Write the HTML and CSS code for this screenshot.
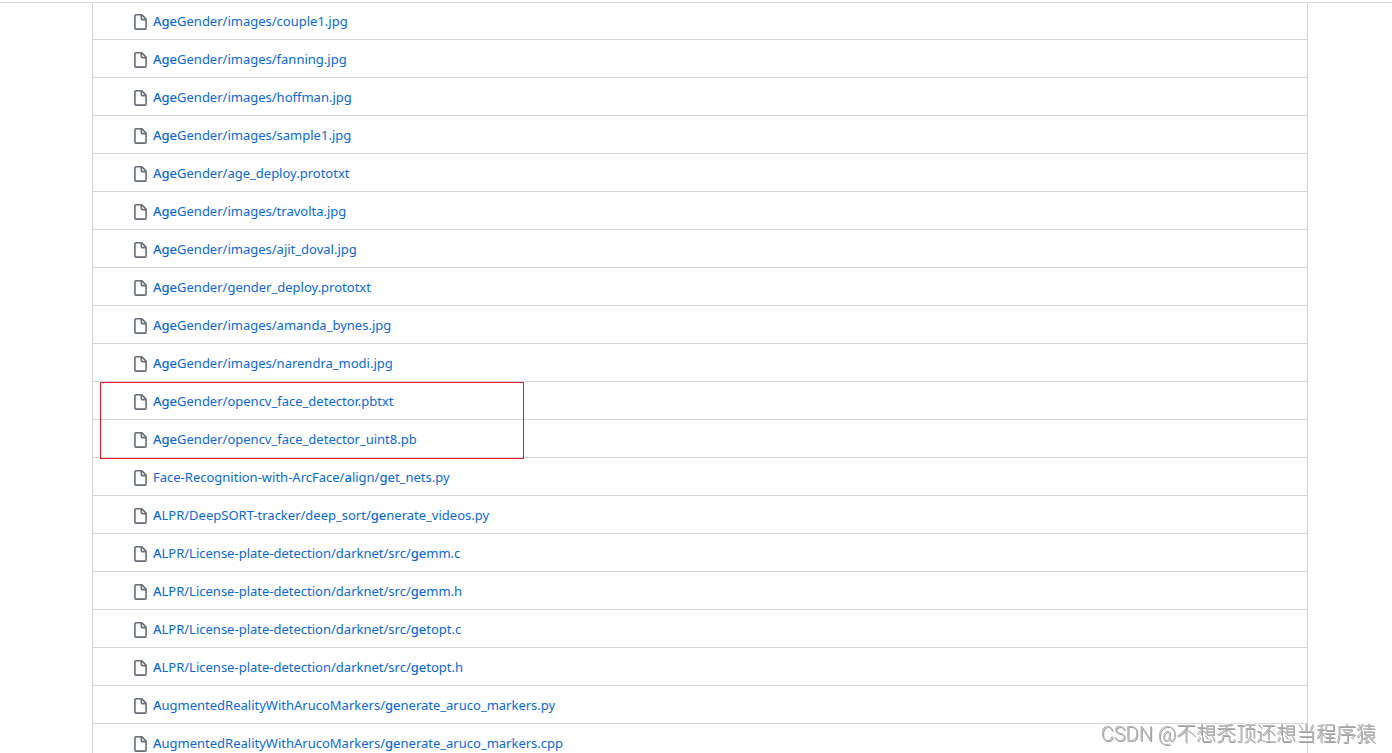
FILE: index.html
```
<!DOCTYPE html>
<html lang="en">
<head>
<meta charset="utf-8">
<title>File search</title>
<link rel="stylesheet" href="styles.css">
</head>
<body>
<svg class="sprite" aria-hidden="true">
  <symbol id="file" viewBox="0 0 16 16"><path fill-rule="evenodd" d="M3.75 1.5a.25.25 0 00-.25.25v11.5c0 .138.112.25.25.25h8.5a.25.25 0 00.25-.25V6H9.75A1.75 1.75 0 018 4.25V1.5H3.75zm5.75.56v2.19c0 .138.112.25.25.25h2.19L9.5 2.06zM2 1.75C2 .784 2.784 0 3.75 0h5.086c.464 0 .909.184 1.237.513l3.414 3.414c.329.328.513.773.513 1.237v8.086A1.75 1.75 0 0112.25 15h-8.5A1.75 1.75 0 012 13.25V1.75z"/></symbol>
</svg>
<main class="page">
<ul class="files">
<li class="row"><svg class="icon"><use href="#file"/></svg><a href="#"><b>Age</b>Gender/images/couple1.jpg</a></li>
<li class="row"><svg class="icon"><use href="#file"/></svg><a href="#"><b>Age</b>Gender/images/fanning.jpg</a></li>
<li class="row"><svg class="icon"><use href="#file"/></svg><a href="#"><b>Age</b>Gender/images/hoffman.jpg</a></li>
<li class="row"><svg class="icon"><use href="#file"/></svg><a href="#"><b>Age</b>Gender/images/sample1.jpg</a></li>
<li class="row"><svg class="icon"><use href="#file"/></svg><a href="#"><b>Age</b>Gender/age_deploy.prototxt</a></li>
<li class="row"><svg class="icon"><use href="#file"/></svg><a href="#"><b>Age</b>Gender/images/travolta.jpg</a></li>
<li class="row"><svg class="icon"><use href="#file"/></svg><a href="#"><b>Age</b>Gender/images/ajit_doval.jpg</a></li>
<li class="row"><svg class="icon"><use href="#file"/></svg><a href="#"><b>Age</b>Gender/gender_deploy.prototxt</a></li>
<li class="row"><svg class="icon"><use href="#file"/></svg><a href="#"><b>Age</b>Gender/images/amanda_bynes.jpg</a></li>
<li class="row"><svg class="icon"><use href="#file"/></svg><a href="#"><b>Age</b>Gender/images/narendra_modi.jpg</a></li>
<li class="row marked"><svg class="icon"><use href="#file"/></svg><a href="#"><b>Age</b>Gender/opencv_face_detector.pbtxt</a></li>
<li class="row"><svg class="icon"><use href="#file"/></svg><a href="#"><b>Age</b>Gender/opencv_face_detector_uint8.pb</a></li>
<li class="row"><svg class="icon"><use href="#file"/></svg><a href="#">Face-Recognition-with-ArcFace/<b>a</b>lign/<b>ge</b>t_nets.py</a></li>
<li class="row"><svg class="icon"><use href="#file"/></svg><a href="#"><b>A</b>LPR/DeepSORT-tracker/deep_sort/<b>ge</b>nerate_videos.py</a></li>
<li class="row"><svg class="icon"><use href="#file"/></svg><a href="#"><b>A</b>LPR/License-plate-detection/darknet/src/<b>ge</b>mm.c</a></li>
<li class="row"><svg class="icon"><use href="#file"/></svg><a href="#"><b>A</b>LPR/License-plate-detection/darknet/src/<b>ge</b>mm.h</a></li>
<li class="row"><svg class="icon"><use href="#file"/></svg><a href="#"><b>A</b>LPR/License-plate-detection/darknet/src/<b>ge</b>topt.c</a></li>
<li class="row"><svg class="icon"><use href="#file"/></svg><a href="#"><b>A</b>LPR/License-plate-detection/darknet/src/<b>ge</b>topt.h</a></li>
<li class="row"><svg class="icon"><use href="#file"/></svg><a href="#"><b>A</b>ugmentedRealityWithArucoMarkers/<b>ge</b>nerate_aruco_markers.py</a></li>
<li class="row"><svg class="icon"><use href="#file"/></svg><a href="#"><b>A</b>ugmentedRealityWithArucoMarkers/<b>ge</b>nerate_aruco_markers.cpp</a></li>
</ul>
</main>
<div class="watermark">CSDN @不想秃顶还想当程序猿</div>
</body>
</html>
```
FILE: styles.css
```
*, *::after { box-sizing: border-box; }
body {
  margin: 0;
  padding-top: 2px;
  height: 100vh;
  overflow: hidden;
  background: #fff;
  font: 13px/20px "Noto Sans", "Open Sans", sans-serif;
}
.sprite { display: none; }
.page {
  border-top: 1px solid #d8dbdf;
  padding: 0 84px 0 92px;
}
.files {
  margin: 0;
  padding: 0;
  list-style: none;
  border: 1px solid #d0d7de;
  border-width: 0 1px;
}
.row {
  display: flex;
  align-items: flex-start;
  gap: 4px;
  padding: 9px 16px 8px 39px;
  border-bottom: 1px solid #d0d7de;
}
.row:first-child { padding-top: 8px; }
.icon {
  width: 17px;
  height: 17px;
  margin-top: 3px;
  fill: #656d76;
  flex: none;
}
.row a { color: #0969da; text-decoration: none; }
.row b { font-weight: 500; }
.marked { position: relative; }
.marked::after {
  content: "";
  position: absolute;
  top: 0;
  left: 7px;
  width: 424px;
  height: 77px;
  border: 1px solid #ed1c24;
  pointer-events: none;
}
.watermark {
  position: fixed;
  right: 16px;
  bottom: 4px;
  font: 300 20px/30px Roboto, "Noto Sans CJK SC", sans-serif;
  color: #b4b4b4;
  text-shadow: 1px 1px 0 #a0a0a0, -1px -1px 0 #fff;
}
```
